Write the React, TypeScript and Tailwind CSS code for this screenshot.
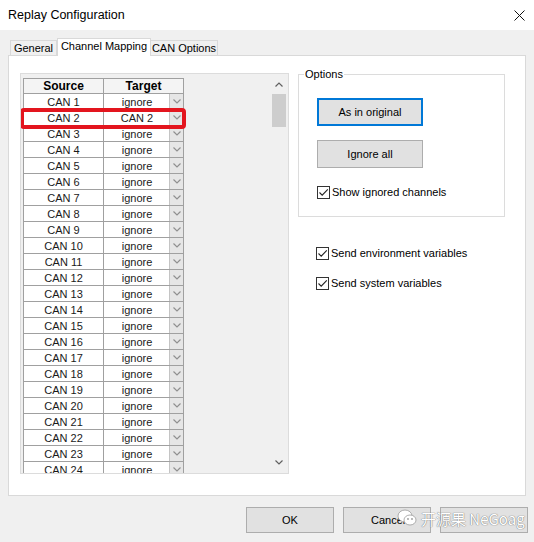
import { useState } from 'react';

const CHANNELS = Array.from({ length: 24 }, (_, i) => ({
  source: `CAN ${i + 1}`,
  target: i === 1 ? 'CAN 2' : 'ignore',
}));

function Chevron({ up = false, className = '' }: { up?: boolean; className?: string }) {
  return (
    <svg width="8" height="5" viewBox="0 0 8 5" className={className}>
      <path
        d={up ? 'M0.5 4.5 L4 1 L7.5 4.5' : 'M0.5 0.5 L4 4 L7.5 0.5'}
        fill="none"
        stroke="currentColor"
        strokeWidth="1.2"
      />
    </svg>
  );
}

function Checkbox({ label, checked, onChange }: { label: string; checked: boolean; onChange: () => void }) {
  return (
    <button type="button" onClick={onChange} className="flex items-center gap-[2px] text-[11px] leading-none text-black">
      <span className="w-[13px] h-[13px] border border-[#333333] bg-white flex items-center justify-center">
        {checked && (
          <svg width="11" height="11" viewBox="0 0 11 11">
            <path d="M1.5 5.5 L4.2 8.2 L9.8 2.4" fill="none" stroke="#222222" strokeWidth="1.1" />
          </svg>
        )}
      </span>
      <span>{label}</span>
    </button>
  );
}

function DialogButton({ children, focused = false }: { children: React.ReactNode; focused?: boolean }) {
  return (
    <button
      type="button"
      className={
        focused
          ? 'w-[106px] h-[28px] bg-[#e1e1e1] border border-[#0078d7] shadow-[inset_0_0_0_1px_#0078d7] text-[11px] text-black'
          : 'w-[106px] h-[28px] bg-[#e1e1e1] border border-[#adadad] text-[11px] text-black'
      }
    >
      {children}
    </button>
  );
}

export default function App() {
  const [showIgnored, setShowIgnored] = useState(true);
  const [sendEnv, setSendEnv] = useState(true);
  const [sendSys, setSendSys] = useState(true);

  return (
    <div className="relative w-[534px] h-[542px] overflow-hidden bg-[#f0f0f0] flex flex-col font-['Liberation_Sans',Arial,sans-serif] text-[#1a1a1a]">
      {/* title bar */}
      <div className="h-[30px] bg-white flex items-center justify-between pl-[8px] pr-[9px] shrink-0">
        <span className="text-[12.5px] text-black">Replay Configuration</span>
        <svg width="11" height="11" viewBox="0 0 11 11">
          <path d="M0.5 0.5 L10.5 10.5 M10.5 0.5 L0.5 10.5" stroke="#111111" strokeWidth="1" />
        </svg>
      </div>

      {/* tabs */}
      <div className="mt-[8px] ml-[10px] flex items-end h-[17px] shrink-0 relative z-10">
        <div className="w-[47px] h-[15px] border border-b-0 border-[#d9d9d9] bg-[#f0f0f0] flex items-center justify-center text-[11px] text-black">
          General
        </div>
        <div className="w-[94px] h-[18px] -mb-px border border-b-0 border-[#d9d9d9] bg-white flex items-center justify-center text-[11px] text-black pb-[2px]">
          Channel Mapping
        </div>
        <div className="w-[67px] h-[15px] border border-b-0 border-l-0 border-[#d9d9d9] bg-[#f0f0f0] flex items-center justify-center text-[11px] text-black">
          CAN Options
        </div>
      </div>

      {/* tab panel */}
      <div className="mx-[8px] h-[441px] shrink-0 bg-white border border-[#d9d9d9] flex items-start gap-[9px] pt-[17px] pl-[11px]">
        {/* channel list */}
        <div className="w-[269px] h-[401px] border border-[#dcdcdc] bg-[#f0f0f0] flex overflow-hidden">
          <div className="flex-1 pl-[2px] pt-[4px] overflow-hidden">
            <div className="relative w-[161px]">
              <div className="border-t border-l border-[#a0a0a0]">
                <div className="flex border-b border-[#a0a0a0] h-[15px]">
                  <div className="w-[80px] border-r border-[#a0a0a0] bg-[#f4f4f4] flex items-center justify-center text-[12px] font-bold text-black leading-none">
                    Source
                  </div>
                  <div className="w-[80px] border-r border-[#a0a0a0] bg-[#f4f4f4] flex items-center justify-center text-[12px] font-bold text-black leading-none">
                    Target
                  </div>
                </div>
                {CHANNELS.map((c) => (
                  <div key={c.source} className="flex border-b border-[#a0a0a0] h-[16px] bg-white">
                    <div className="w-[80px] border-r border-[#a0a0a0] flex items-center justify-center text-[11px] leading-none pt-[1px]">
                      {c.source}
                    </div>
                    <div className="w-[80px] border-r border-[#a0a0a0] flex items-center">
                      <span className="flex-1 text-center text-[11px] leading-none pl-[1px] pt-[1px]">{c.target}</span>
                      <span className="w-[14px] h-[15px] bg-[#e6e6e6] border-l border-[#c4c4c4] flex items-center justify-center text-[#909090]">
                        <Chevron />
                      </span>
                    </div>
                  </div>
                ))}
              </div>
              <div className="absolute left-[-3px] top-[30px] w-[166px] h-[21px] border-[4px] border-[#e3151e] rounded-[4px]" />
            </div>
          </div>
          {/* scrollbar */}
          <div className="w-[17px] mr-[1px] flex flex-col items-center">
            <div className="h-[20px] flex items-center justify-center text-[#606060] pt-[1px]">
              <Chevron up />
            </div>
            <div className="w-[14px] h-[33px] bg-[#cdcdcd]" />
            <div className="flex-1" />
            <div className="h-[20px] flex items-center justify-center text-[#606060] pb-[2px]">
              <Chevron />
            </div>
          </div>
        </div>

        {/* options */}
        <div className="flex flex-col pt-[1px]">
          <div className="relative w-[207px] h-[143px] border border-[#dcdcdc] flex flex-col items-start pl-[18px] pt-[23px]">
            <span className="absolute left-[5px] top-[-8px] bg-white px-[1px] text-[11px] text-black leading-[14px]">Options</span>
            <DialogButton focused>As in original</DialogButton>
            <div className="mt-[14px]">
              <DialogButton>Ignore all</DialogButton>
            </div>
            <div className="mt-[18px]">
              <Checkbox label="Show ignored channels" checked={showIgnored} onChange={() => setShowIgnored(!showIgnored)} />
            </div>
          </div>
          <div className="mt-[30px] ml-[18px] flex flex-col items-start gap-[17px]">
            <Checkbox label="Send environment variables" checked={sendEnv} onChange={() => setSendEnv(!sendEnv)} />
            <Checkbox label="Send system variables" checked={sendSys} onChange={() => setSendSys(!sendSys)} />
          </div>
        </div>
      </div>

      {/* dialog buttons */}
      <div className="mt-[11px] flex justify-end gap-[9px] pr-[6px]">
        <button type="button" className="w-[88px] h-[26px] bg-[#e1e1e1] border border-[#adadad] text-[11px] text-black">
          OK
        </button>
        <button type="button" className="w-[88px] h-[26px] bg-[#e1e1e1] border border-[#adadad] text-[11px] text-black text-left pl-[27px]">
          Cancel
        </button>
        <button type="button" aria-label="Help" className="w-[88px] h-[26px] bg-[#e1e1e1] border border-[#adadad]" />
      </div>

      {/* watermark */}
      <div className="absolute left-[397px] top-[509px] flex items-center gap-[4px] pointer-events-none">
        <svg width="20" height="18" viewBox="0 0 20 18">
          <ellipse cx="8" cy="7" rx="7" ry="6" fill="white" stroke="#9a9a9a" strokeWidth="0.8" />
          <ellipse cx="13" cy="11" rx="6" ry="5" fill="white" stroke="#9a9a9a" strokeWidth="0.8" />
          <circle cx="11" cy="10" r="0.9" fill="#9a9a9a" />
          <circle cx="15" cy="10" r="0.9" fill="#9a9a9a" />
        </svg>
        <span className="text-[15px] leading-none text-white font-['Noto_Sans_CJK_SC','Liberation_Sans',sans-serif] [text-shadow:0_0_1px_#777,0_0_1px_#777]">
          开源果 NeGoag
        </span>
      </div>
    </div>
  );
}
